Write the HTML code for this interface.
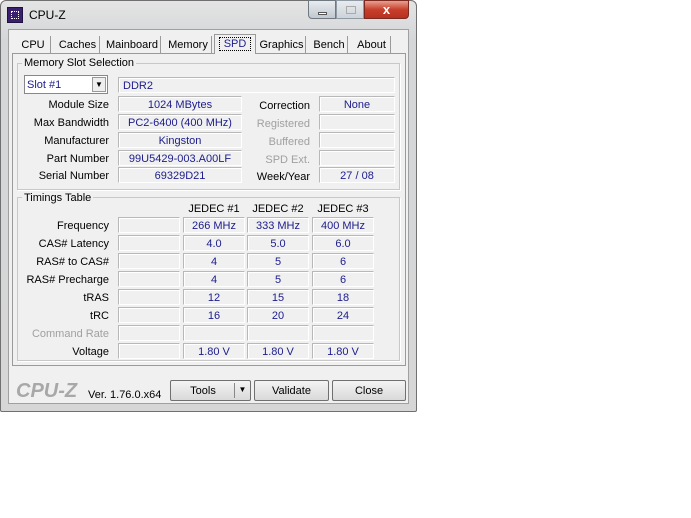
<!DOCTYPE html>
<html><head><style>
*{box-sizing:border-box;margin:0;padding:0}
body{width:691px;height:518px;background:#fff;position:relative;overflow:hidden;font-family:"Liberation Sans",sans-serif;font-size:11px;color:#000}
.a{position:absolute}
.win{left:0;top:0;width:417px;height:412px;background:linear-gradient(#e4e4e4,#d4d6d8 40px,#d6d6d6);border:1px solid #707070;border-radius:6px 6px 2px 2px}
.client{left:8px;top:29px;width:401px;height:375px;background:#f0f0f0;border:1px solid #a0a0a0}
.lbl{text-align:right;height:16px;line-height:18px}
.box{border:1px solid #b8b8b8;border-right-color:#fff;border-bottom-color:#fff;height:16px;line-height:16px;text-align:center;color:#1c1c8c;background:#f0f0f0;box-shadow:inset 1px 1px 0 #fff}
.gray{color:#a0a0a0}
.grp{border:1px solid #c8c8c8;box-shadow:1px 1px 0 #fff}
.gt{background:#f0f0f0;padding:0 2px;line-height:12px}
.btn{border:1px solid #707070;border-radius:2px;background:linear-gradient(#f4f4f4,#e6e6e6 50%,#d9d9d9);text-align:center;line-height:20px;height:21px;font-size:11px}
.tab{top:36px;height:18px;line-height:18px;border-right:1px solid #9a9a9a;text-align:center;font-size:11px}
</style></head><body>
<div class="a win"></div>
<div class="a" style="left:7px;top:7px;width:16px;height:16px;background:#3a1f6e;border:1px solid #201040"><div class="a" style="left:3px;top:3px;width:8px;height:8px;border:1px dotted #fff"></div></div>
<div class="a" style="left:29px;top:8px;font-size:12px">CPU-Z</div>
<div class="a" style="left:308px;top:0;width:28px;height:19px;border:1px solid #707880;border-radius:0 0 0 4px;background:linear-gradient(#e8ecf0,#c0c8d0)"><div class="a" style="left:9px;top:11px;width:9px;height:3px;background:#fff;border:1px solid #555"></div></div>
<div class="a" style="left:336px;top:0;width:28px;height:19px;border:1px solid #909aa4;background:linear-gradient(#e8ecf0,#cdd3d9)"><div class="a" style="left:9px;top:5px;width:10px;height:8px;border:1px solid #aaa"></div></div>
<div class="a" style="left:364px;top:0;width:45px;height:19px;border:1px solid #7a2a20;border-radius:0 0 4px 0;background:linear-gradient(#e8a090,#c8402c 50%,#b83020);color:#fff;text-align:center;font-weight:bold;font-size:13px;line-height:17px">x</div>
<div class="a client"></div>
<div class="a" style="left:12px;top:53px;width:394px;height:313px;border:1px solid #9a9a9a;background:#f0f0f0"></div>
<div class="a tab" style="left:16px;width:35px">CPU</div>
<div class="a tab" style="left:56px;width:44px">Caches</div>
<div class="a tab" style="left:104px;width:57px">Mainboard</div>
<div class="a tab" style="left:165px;width:47px">Memory</div>
<div class="a tab" style="left:214px;top:34px;height:20px;width:42px;background:#f0f0f0;border:1px solid #9a9a9a;border-bottom:none;color:#1c1c8c;line-height:19px"><span style="border:1px dotted #000;padding:0 4px">SPD</span></div>
<div class="a tab" style="left:258px;width:48px">Graphics</div>
<div class="a tab" style="left:311px;width:37px">Bench</div>
<div class="a tab" style="left:353px;width:38px">About</div>

<div class="a grp" style="left:17px;top:63px;width:383px;height:127px"></div>
<div class="a gt" style="left:22px;top:57px;line-height:13px">Memory Slot Selection</div>
<div class="a" style="left:24px;top:75px;width:84px;height:19px;border:1px solid #888;background:#fff;color:#1c1c8c;line-height:18px;padding-left:2px">Slot #1<div class="a" style="left:67px;top:1px;width:14px;height:15px;border:1px solid #999;background:#eee;color:#000;text-align:center;font-size:8px;line-height:14px">▼</div></div>
<div class="a box" style="left:118px;top:77px;width:277px;text-align:left;padding-left:4px">DDR2</div>

<div class="a lbl" style="left:20px;top:96px;width:89px">Module Size</div>
<div class="a lbl" style="left:20px;top:114px;width:89px">Max Bandwidth</div>
<div class="a lbl" style="left:20px;top:132px;width:89px">Manufacturer</div>
<div class="a lbl" style="left:20px;top:150px;width:89px">Part Number</div>
<div class="a lbl" style="left:20px;top:167px;width:89px">Serial Number</div>
<div class="a box" style="left:118px;top:96px;width:124px">1024 MBytes</div>
<div class="a box" style="left:118px;top:114px;width:124px">PC2-6400 (400 MHz)</div>
<div class="a box" style="left:118px;top:132px;width:124px">Kingston</div>
<div class="a box" style="left:118px;top:150px;width:124px">99U5429-003.A00LF</div>
<div class="a box" style="left:118px;top:167px;width:124px">69329D21</div>
<div class="a lbl" style="left:240px;top:97px;width:70px">Correction</div>
<div class="a lbl gray" style="left:240px;top:115px;width:70px">Registered</div>
<div class="a lbl gray" style="left:240px;top:133px;width:70px">Buffered</div>
<div class="a lbl gray" style="left:240px;top:151px;width:70px">SPD Ext.</div>
<div class="a lbl" style="left:240px;top:168px;width:70px">Week/Year</div>
<div class="a box" style="left:319px;top:96px;width:76px">None</div>
<div class="a box" style="left:319px;top:114px;width:76px"></div>
<div class="a box" style="left:319px;top:132px;width:76px"></div>
<div class="a box" style="left:319px;top:150px;width:76px"></div>
<div class="a box" style="left:319px;top:167px;width:76px">27 / 08</div>

<div class="a grp" style="left:17px;top:197px;width:383px;height:164px"></div>
<div class="a gt" style="left:22px;top:192px;line-height:13px">Timings Table</div>
<div class="a" style="left:183px;top:203px;width:62px;text-align:center">JEDEC #1</div>
<div class="a" style="left:247px;top:203px;width:62px;text-align:center">JEDEC #2</div>
<div class="a" style="left:312px;top:203px;width:62px;text-align:center">JEDEC #3</div>

<div class="a lbl" style="left:20px;top:217px;width:89px">Frequency</div>
<div class="a lbl" style="left:20px;top:235px;width:89px">CAS# Latency</div>
<div class="a lbl" style="left:20px;top:253px;width:89px">RAS# to CAS#</div>
<div class="a lbl" style="left:20px;top:271px;width:89px">RAS# Precharge</div>
<div class="a lbl" style="left:20px;top:289px;width:89px">tRAS</div>
<div class="a lbl" style="left:20px;top:307px;width:89px">tRC</div>
<div class="a lbl gray" style="left:20px;top:325px;width:89px">Command Rate</div>
<div class="a lbl" style="left:20px;top:343px;width:89px">Voltage</div>

<div class="a box" style="left:118px;top:217px;width:62px"></div><div class="a box" style="left:183px;top:217px;width:62px">266 MHz</div><div class="a box" style="left:247px;top:217px;width:62px">333 MHz</div><div class="a box" style="left:312px;top:217px;width:62px">400 MHz</div>
<div class="a box" style="left:118px;top:235px;width:62px"></div><div class="a box" style="left:183px;top:235px;width:62px">4.0</div><div class="a box" style="left:247px;top:235px;width:62px">5.0</div><div class="a box" style="left:312px;top:235px;width:62px">6.0</div>
<div class="a box" style="left:118px;top:253px;width:62px"></div><div class="a box" style="left:183px;top:253px;width:62px">4</div><div class="a box" style="left:247px;top:253px;width:62px">5</div><div class="a box" style="left:312px;top:253px;width:62px">6</div>
<div class="a box" style="left:118px;top:271px;width:62px"></div><div class="a box" style="left:183px;top:271px;width:62px">4</div><div class="a box" style="left:247px;top:271px;width:62px">5</div><div class="a box" style="left:312px;top:271px;width:62px">6</div>
<div class="a box" style="left:118px;top:289px;width:62px"></div><div class="a box" style="left:183px;top:289px;width:62px">12</div><div class="a box" style="left:247px;top:289px;width:62px">15</div><div class="a box" style="left:312px;top:289px;width:62px">18</div>
<div class="a box" style="left:118px;top:307px;width:62px"></div><div class="a box" style="left:183px;top:307px;width:62px">16</div><div class="a box" style="left:247px;top:307px;width:62px">20</div><div class="a box" style="left:312px;top:307px;width:62px">24</div>
<div class="a box" style="left:118px;top:325px;width:62px"></div><div class="a box" style="left:183px;top:325px;width:62px"></div><div class="a box" style="left:247px;top:325px;width:62px"></div><div class="a box" style="left:312px;top:325px;width:62px"></div>
<div class="a box" style="left:118px;top:343px;width:62px"></div><div class="a box" style="left:183px;top:343px;width:62px">1.80 V</div><div class="a box" style="left:247px;top:343px;width:62px">1.80 V</div><div class="a box" style="left:312px;top:343px;width:62px">1.80 V</div>

<div class="a" style="left:16px;top:380px;font-size:20px;font-weight:bold;font-style:italic;color:#a8a8a8">CPU-Z</div>
<div class="a" style="left:88px;top:389px">Ver. 1.76.0.x64</div>
<div class="a btn" style="left:170px;top:380px;width:81px"><span class="a" style="left:0;width:64px">Tools</span><span class="a" style="left:63px;top:2px;height:15px;border-left:1px solid #888;width:16px;font-size:8px;line-height:14px">▼</span></div>
<div class="a btn" style="left:254px;top:380px;width:75px">Validate</div>
<div class="a btn" style="left:332px;top:380px;width:74px">Close</div>
</body></html>
